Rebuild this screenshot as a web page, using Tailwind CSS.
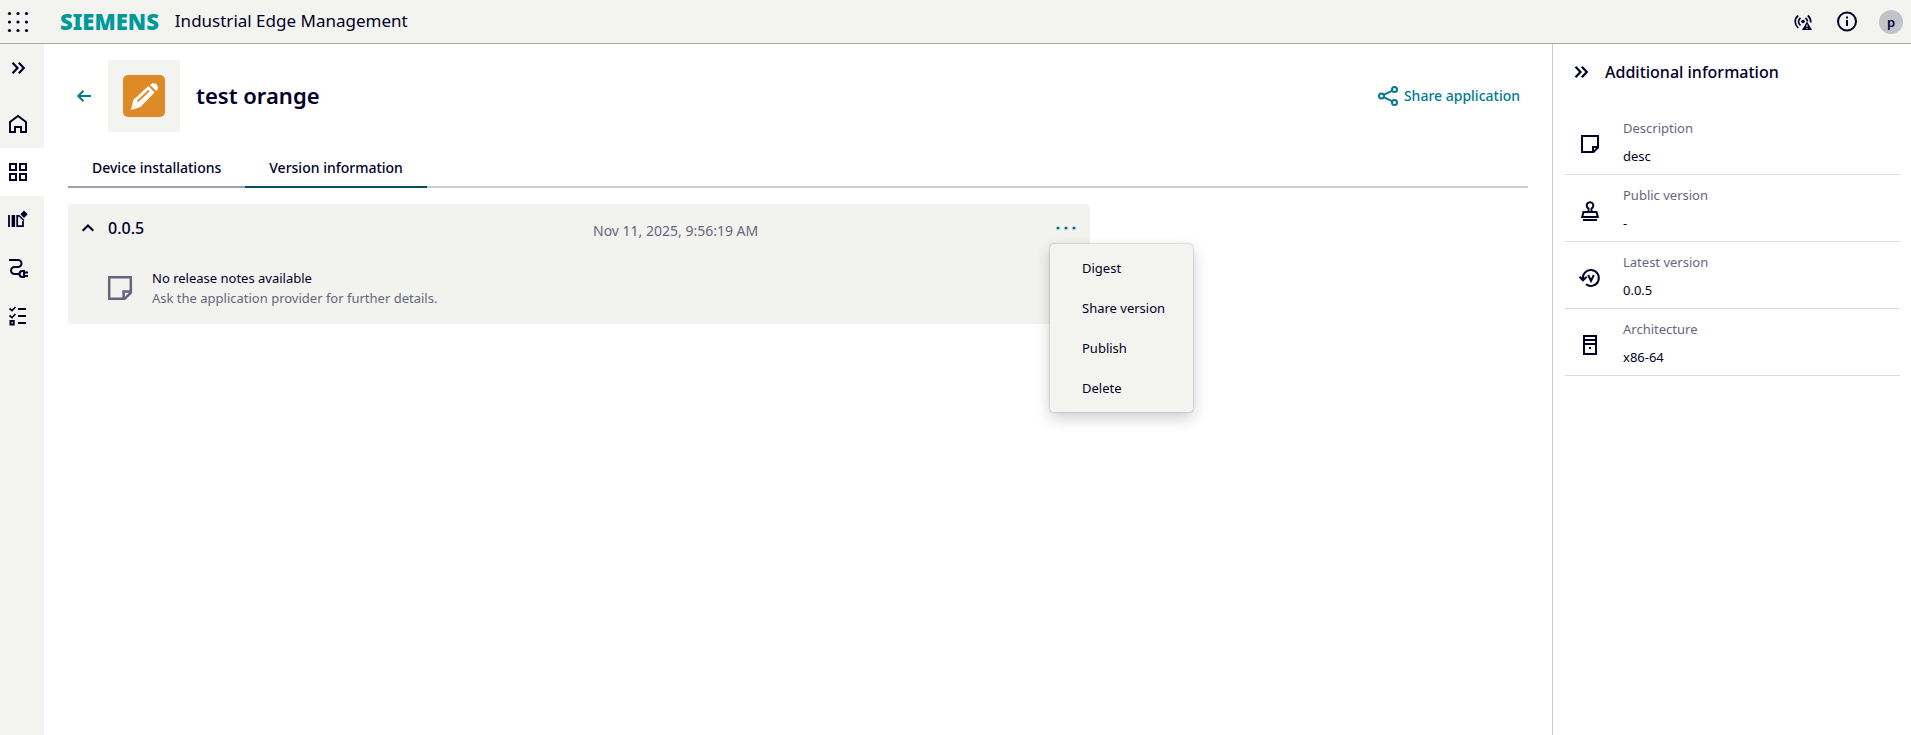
<!DOCTYPE html>
<html lang="en">
<head>
<meta charset="utf-8">
<title>Industrial Edge Management</title>
<script src="https://cdn.jsdelivr.net/npm/@tailwindcss/browser@4"></script>
</head>
<body class="flex min-h-screen flex-col bg-white font-['Noto_Sans','Open_Sans',sans-serif] text-[13px] leading-5 text-[#000028]">
  <header class="flex h-11 shrink-0 items-center border-b border-[#a6a6ab] bg-[#f3f3f0] pr-2 pl-1">
    <button aria-label="Open app switcher" class="flex size-7 items-center justify-center">
      <svg class="size-6" viewBox="0 0 24 24" fill="currentColor"><circle cx="3.5" cy="3.5" r="1.6"/><circle cx="12" cy="3.5" r="1.6"/><circle cx="20.500" cy="3.5" r="1.6"/><circle cx="3.5" cy="12" r="1.6"/><circle cx="12" cy="12" r="1.6"/><circle cx="20.500" cy="12" r="1.6"/><circle cx="3.5" cy="20.500" r="1.6"/><circle cx="12" cy="20.500" r="1.6"/><circle cx="20.500" cy="20.500" r="1.6"/></svg>
    </button>
    <a href="#" class="ml-7 pb-0.5 text-[22px] leading-7 font-black text-[#009999]">SIEMENS</a>
    <span class="ml-4 pb-0.5 text-[17px]">Industrial Edge Management</span>
    <div class="ml-auto flex items-center gap-5">
      <button aria-label="Connection status" class="flex size-6 items-center justify-center">
        <svg class="size-6" viewBox="0 0 24 24" fill="none" stroke="currentColor" stroke-width="1.700"><path d="M7.200 5.500Q4.200 8 4.200 11.500T7.200 18M16.800 5.500Q19.800 8 19.800 12.500M9.500 8Q7.500 9.500 7.500 11.500T9.500 15.500M14.500 8Q16.500 9.500 16.500 11.500"/><circle cx="12" cy="11.500" r="1.800" fill="currentColor" stroke="none"/><path d="M16 11.500L21 20H11z" fill="currentColor" stroke="none"/><path d="M16 14.500v2.500M16 18v1" stroke="#f3f3f0" stroke-width="1"/></svg>
      </button>
      <button aria-label="About" class="flex size-6 items-center justify-center">
        <svg class="size-6" viewBox="0 0 24 24" fill="none" stroke="currentColor" stroke-width="2"><circle cx="12" cy="11.500" r="9"/><path d="M12 10v6M12 6.500v2"/></svg>
      </button>
      <button aria-label="User profile" class="flex size-6 items-center justify-center rounded-full bg-[#c2c2ca] text-[13px] font-semibold">p</button>
    </div>
  </header>

  <div class="flex grow">
    <nav aria-label="Main navigation" class="flex w-11 shrink-0 flex-col bg-[#f3f3f0]">
      <button aria-label="Expand navigation" class="mb-2 flex h-12 items-center pl-1.5">
        <svg class="size-6" viewBox="0 0 24 24" fill="none" stroke="currentColor" stroke-width="2.200"><path d="M6.500 6.700l5 5.300-5 5.300M12.800 6.700l5 5.300-5 5.300"/></svg>
      </button>
      <a href="#" aria-label="Home" class="flex h-12 items-center pl-1.5">
        <svg class="size-6" viewBox="0 0 24 24" fill="none" stroke="currentColor" stroke-width="2"><path d="M4 20V10l8-6 8 6v10h-5v-5H9v5z"/></svg>
      </a>
      <a href="#" aria-label="Applications" aria-current="page" class="flex h-12 items-center bg-white pl-1.5">
        <svg class="size-6" viewBox="0 0 24 24" fill="none" stroke="currentColor" stroke-width="2"><path d="M4 4h6v6H4zM14 4h6v6h-6zM4 14h6v6H4zM14 14h6v6h-6z"/></svg>
      </a>
      <a href="#" aria-label="Catalog" class="flex h-12 items-center pl-1.5">
        <svg class="size-6" viewBox="0 0 24 24" fill="none" stroke="currentColor" stroke-width="1.800"><path d="M3 7v12M6.500 7.900h1.700v10.200H6.500zM13.500 7.900h-2.300v10.200H17V13"/><path d="M18 2.500l3.700 3.700L18 9.900 14.300 6.200z" fill="currentColor" stroke="none"/><path d="M13.300 8l4.700 4.500" stroke-width="1.500"/></svg>
      </a>
      <a href="#" aria-label="Connections" class="flex h-12 items-center pl-1.5">
        <svg class="size-6" viewBox="0 0 24 24" fill="none" stroke="currentColor" stroke-width="2"><path d="M3 4h9a3.500 3.500 0 0 1 0 7H8.500a3.500 3.500 0 0 0 0 7H13M18 15h-1.500a3 3 0 0 0 0 6H18zM18 16.500h4M18 20h4"/></svg>
      </a>
      <a href="#" aria-label="Tasks" class="flex h-12 items-center pl-1.5">
        <svg class="size-6" viewBox="0 0 24 24" fill="none" stroke="currentColor" stroke-width="2"><path d="M12 5h8M12 12h8M12 19h8M4.500 17h3.200v3.500H4.500z"/><path d="M3.500 4.500l2.500 2 3.500-3.500M3.500 11.500l2.500 2 3.500-3.500" stroke-width="1.700"/></svg>
      </a>
    </nav>

    <main class="flex min-w-0 grow flex-col px-6 pt-4">
      <div class="flex items-center pr-2">
        <button aria-label="Back" class="mr-3 ml-1 flex size-6 items-center justify-center text-[#007993]">
          <svg class="size-6" viewBox="0 0 24 24" fill="none" stroke="currentColor" stroke-width="2"><path d="M19 12H6.500M11.500 6.800L6.300 12l5.200 5.200"/></svg>
        </button>
        <div class="flex size-18 items-center justify-center bg-[#f3f3f0]">
          <svg class="size-[42px]" viewBox="0 0 42 42"><rect width="42" height="42" rx="5" fill="#dd8a27"/><path d="M8 35l2.200-10L25.500 11l6 6.500L17.500 32z" fill="#fff"/><path d="M27 10c2-2.500 5-2.200 6.700-.6 1.700 1.800 1.800 4.600-.5 6.600z" fill="#fff"/><path d="M14.500 26.500L26 15.500" stroke="#dd8a27" stroke-width="1.800"/></svg>
        </div>
        <h1 class="ml-4 pb-0.5 text-[22px] leading-8 font-semibold">test orange</h1>
        <button class="ml-auto flex items-center gap-1 text-sm font-medium text-[#007993]">
          <svg class="size-6" viewBox="0 0 24 24" fill="none" stroke="currentColor" stroke-width="2"><circle cx="5.500" cy="12" r="2.500"/><circle cx="18.500" cy="5.500" r="2.500"/><circle cx="18.500" cy="18.500" r="2.500"/><path d="M7.700 10.900l8.600-4.300M7.700 13.100l8.600 4.300"/></svg>
          Share application
        </button>
      </div>

      <div role="tablist" class="mt-5 flex h-9 text-sm font-medium">
        <button role="tab" aria-selected="false" class="border-b-2 border-[#a0a0b4] px-6 pb-0.5">Device installations</button>
        <button role="tab" aria-selected="true" class="border-b-2 border-[#005159] px-6 pb-0.5">Version information</button>
        <div class="grow border-b-2 border-[#ccccd4]"></div>
      </div>

      <section class="mt-4 w-[70%] rounded bg-[#f2f2ee] pb-4">
        <div class="flex items-center pt-2 pr-2 pl-2">
          <button aria-label="Collapse version" aria-expanded="true" class="flex size-6 items-center justify-center">
            <svg class="size-6" viewBox="0 0 24 24" fill="none" stroke="currentColor" stroke-width="2.200"><path d="M6.700 14.700L12 9.500l5.300 5.200"/></svg>
          </button>
          <h2 class="ml-2 flex-1 text-base font-medium">0.0.5</h2>
          <span class="flex-1 pt-1.5 pl-7 text-sm text-[#66667e]">Nov 11, 2025, 9:56:19 AM</span>
          <div class="relative">
            <button aria-label="More actions" aria-haspopup="menu" aria-expanded="true" class="flex size-8 items-center justify-center text-[#007993]">
              <svg class="size-6" viewBox="0 0 24 24" fill="currentColor"><circle cx="4" cy="12" r="1.600"/><circle cx="12" cy="12" r="1.600"/><circle cx="20" cy="12" r="1.600"/></svg>
            </button>
            <div role="menu" class="absolute top-full left-0 z-10 flex flex-col rounded bg-[#f3f3f0] py-1 whitespace-nowrap shadow-[0_0_2px_rgba(0,0,40,0.35),0_6px_16px_rgba(0,0,40,0.2)]">
              <button role="menuitem" class="h-10 pr-7 pl-8 text-left">Digest</button>
              <button role="menuitem" class="h-10 pr-7 pl-8 text-left">Share version</button>
              <button role="menuitem" class="h-10 pr-7 pl-8 text-left">Publish</button>
              <button role="menuitem" class="h-10 pr-7 pl-8 text-left">Delete</button>
            </div>
          </div>
        </div>
        <div class="mt-6 flex items-center gap-4 pl-9">
          <svg class="size-8 text-[#66667e]" viewBox="0 0 24 24" fill="none" stroke="currentColor" stroke-width="1.900"><path d="M3.900 3.900h16.200v11.600l-4.600 4.600H3.900zM20 14.700h-5.300V20"/></svg>
          <div>
            <p>No release notes available</p>
            <p class="text-[#66667e]">Ask the application provider for further details.</p>
          </div>
        </div>
      </section>
    </main>

    <aside aria-label="Additional information" class="w-[359px] shrink-0 border-l border-[#ccccd4] pr-[11px] pl-3">
      <div class="flex items-center pt-4">
        <button aria-label="Collapse panel" class="ml-1 flex size-6 items-center justify-center">
          <svg class="size-6" viewBox="0 0 24 24" fill="none" stroke="currentColor" stroke-width="2.200"><path d="M6.500 6.700l5 5.300-5 5.300M12.800 6.700l5 5.300-5 5.300"/></svg>
        </button>
        <h2 class="ml-3 text-base font-medium">Additional information</h2>
      </div>
      <dl class="mt-6">
        <div class="flex items-center border-b border-[#dcdce0] pt-[10px] pb-2 pl-[13px]">
          <svg class="mt-1 mr-[21px] size-6" viewBox="0 0 24 24" fill="none" stroke="currentColor" stroke-width="2"><path d="M4 4h16v11.500L15.500 20H4zM20 15h-5v5"/></svg>
          <div><dt class="text-[#66667e]">Description</dt><dd class="mt-2">desc</dd></div>
        </div>
        <div class="flex items-center border-b border-[#dcdce0] pt-[10px] pb-2 pl-[13px]">
          <svg class="mt-1 mr-[21px] size-6" viewBox="0 0 24 24" fill="none" stroke="currentColor" stroke-width="2"><path d="M5 21h14M4.200 18l1.300-5h13l1.300 5zM10.500 13V9.500a3.300 3.300 0 1 1 3 0V13"/></svg>
          <div><dt class="text-[#66667e]">Public version</dt><dd class="mt-2">-</dd></div>
        </div>
        <div class="flex items-center border-b border-[#dcdce0] pt-[10px] pb-2 pl-[13px]">
          <svg class="mt-1 mr-[21px] size-6" viewBox="0 0 24 24" fill="none" stroke="currentColor" stroke-width="2"><path d="M5 13.500A8 8 0 1 1 8 18.300M1.500 10.800L5 14.300l3.700-3.500M10.200 9l2.800 6 2.800-6"/></svg>
          <div><dt class="text-[#66667e]">Latest version</dt><dd class="mt-2">0.0.5</dd></div>
        </div>
        <div class="flex items-center border-b border-[#dcdce0] pt-[10px] pb-2 pl-[13px]">
          <svg class="mt-1 mr-[21px] size-6" viewBox="0 0 24 24" fill="none" stroke="currentColor" stroke-width="2"><path d="M6 3h12v18H6zM6 7h12M6 11h12"/><path d="M11 14h2v2h-2z" fill="currentColor" stroke="none"/></svg>
          <div><dt class="text-[#66667e]">Architecture</dt><dd class="mt-2">x86-64</dd></div>
        </div>
      </dl>
    </aside>
  </div>
</body>
</html>
